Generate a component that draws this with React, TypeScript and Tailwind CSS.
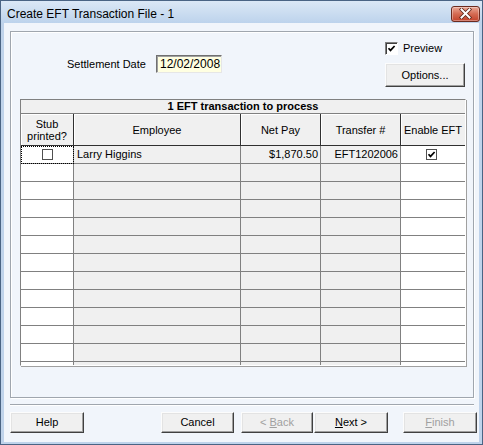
import React from "react";

const font = "font-['Liberation_Sans',Arial,sans-serif]";

function Check({ checked, size = 11 }: { checked?: boolean; size?: number }) {
  return (
    <div
      className={`flex items-center justify-center bg-white border border-[#505050] ${
        size === 11 ? "w-[11px] h-[11px]" : "w-[13px] h-[13px]"
      }`}
    >
      {checked && (
        <svg width="9" height="9" viewBox="0 0 9 9">
          <path d="M1.5 4.2 L3.5 6.4 L7.6 2" fill="none" stroke="#000" strokeWidth="1.7" />
        </svg>
      )}
    </div>
  );
}

function Btn({
  children,
  disabled,
  className = "",
}: {
  children: React.ReactNode;
  disabled?: boolean;
  className?: string;
}) {
  return (
    <div
      className={`h-[21px] flex items-center justify-center bg-[#f0f0f0] border border-t-[#fcfcfc] border-l-[#fcfcfc] border-r-[#404040] border-b-[#404040] shadow-[inset_-1px_-1px_0_#a0a0a0,inset_1px_1px_0_#e3e3e3] text-[11px] ${
        disabled ? "text-[#a0a0a0]" : "text-black"
      } ${className}`}
    >
      {children}
    </div>
  );
}

const cols = "grid grid-cols-[53px_167px_80px_80px_64px]";

const rows = Array.from({ length: 13 }, (_, i) => i);

export default function App() {
  return (
    <div className={`w-[483px] h-[445px] flex flex-col border border-[#4a6484] bg-[#bfd3eb] ${font} text-black select-none`}>
      {/* title bar */}
      <div className="h-[22px] flex items-center pl-[6px] pr-[2px] bg-gradient-to-b from-[#dbe8f6] to-[#bdd3ec]">
        <span className="text-[12px] leading-none pt-[3px]">Create EFT Transaction File - 1</span>
        <div className="ml-auto mt-[3px] w-[29px] h-[16px] rounded-[3px] border border-[#6b2b1f] bg-gradient-to-b from-[#e9a897] via-[#d46a52] to-[#c2412a] flex items-center justify-center shadow-[inset_0_0_0_1px_rgba(255,255,255,0.35)]">
          <svg width="13" height="11" viewBox="0 0 13 11">
            <path d="M2.5 1.5 L10.5 9.5 M10.5 1.5 L2.5 9.5" stroke="#5a2418" strokeWidth="3.6" strokeLinecap="square" />
            <path d="M2.5 1.5 L10.5 9.5 M10.5 1.5 L2.5 9.5" stroke="#fff" strokeWidth="2" strokeLinecap="square" />
          </svg>
        </div>
      </div>

      {/* client */}
      <div className="mx-[3px] h-[419px] bg-[#f1f5fb] pl-[6px] pt-[8px] flex flex-col text-[11px]">
        {/* group box */}
        <div className="w-[464px] h-[367px] border border-[#a0a6ae] shadow-[inset_1px_1px_0_#fff,1px_1px_0_#fff] flex flex-col">
          <div className="h-[67px] flex">
            <div className="pl-[56px] pt-[23px] flex items-start">
              <span className="leading-[18px] w-[89px]">Settlement Date</span>
              <div className="w-[66px] h-[18px] bg-[#ffffe1] border border-t-[#707070] border-l-[#707070] border-r-[#e6e6e6] border-b-[#e6e6e6] shadow-[inset_1px_1px_0_#a0a0a0] pl-[3px] leading-[16px] text-[12px]">
                12/02/2008
              </div>
            </div>
            <div className="ml-auto mr-[8px] w-[80px] pt-[10px] flex flex-col">
              <div className="h-[13px] flex items-center">
                <div className="w-[13px] h-[13px] bg-white border border-t-[#808080] border-l-[#808080] border-r-white border-b-white shadow-[inset_1px_1px_0_#404040] flex items-center justify-center">
                  <svg width="9" height="9" viewBox="0 0 9 9">
                    <path d="M1.5 4.2 L3.5 6.4 L7.6 2" fill="none" stroke="#000" strokeWidth="1.7" />
                  </svg>
                </div>
                <span className="ml-[5px] text-[11px]">Preview</span>
              </div>
              <Btn className="mt-[8px] !h-[24px] w-[80px]">Options...</Btn>
            </div>
          </div>

          {/* grid */}
          <div className="ml-[9px] w-[446px] h-[267px] border border-[#808080] border-r-white border-b-white shadow-[1px_1px_0_#a0a0a0] overflow-hidden bg-white">
            <div className="h-[14px] bg-[#f0f0f0] border-b border-[#808080] text-center font-bold leading-[13px] text-[11px]">
              1 EFT transaction to process
            </div>
            <div className={`${cols} h-[32px] bg-[#f0f0f0]`}>
              {[
                ["Stub", "printed?"],
                ["Employee"],
                ["Net Pay"],
                ["Transfer #"],
                ["Enable EFT"],
              ].map((lines, i) => (
                <div
                  key={i}
                  className={`flex flex-col items-center justify-center leading-[12px] border-b border-[#303030] ${
                    i < 4 ? "border-r" : ""
                  } shadow-[inset_1px_1px_0_#fff]`}
                >
                  {lines.map((l) => (
                    <span key={l}>{l}</span>
                  ))}
                </div>
              ))}
            </div>
            {rows.map((r) => (
              <div key={r} className={`${cols} h-[18px]`}>
                <div
                  className={`border-r border-b border-[#808080] bg-white flex items-center justify-center ${
                    r === 0 ? "outline outline-1 outline-dotted outline-black -outline-offset-1" : ""
                  }`}
                >
                  {r === 0 && <Check />}
                </div>
                <div className="border-r border-b border-[#808080] bg-[#f0f0f0] pl-[3px] leading-[17px]">
                  {r === 0 ? "Larry Higgins" : ""}
                </div>
                <div className="border-r border-b border-[#808080] bg-[#f0f0f0] pr-[2px] text-right leading-[17px]">
                  {r === 0 ? "$1,870.50" : ""}
                </div>
                <div className="border-r border-b border-[#808080] bg-[#f0f0f0] pr-[2px] text-right leading-[17px]">
                  {r === 0 ? "EFT1202006" : ""}
                </div>
                <div className="border-b border-[#808080] bg-white flex items-center justify-center pr-[3px]">
                  {r === 0 && <Check checked />}
                </div>
              </div>
            ))}
          </div>
        </div>

        {/* separator */}
        <div className="mt-[6px] w-[464px] h-[2px] border-t border-[#a0a6ae] border-b border-b-white" />

        {/* buttons */}
        <div className="mt-[6px] flex">
          <Btn className="w-[74px]">Help</Btn>
          <Btn className="w-[73px] ml-[77px]">Cancel</Btn>
          <Btn disabled className="w-[72px] ml-[7px]">
            &lt; <span className="underline ml-[3px]">B</span>ack
          </Btn>
          <Btn className="w-[74px] ml-[1px]">
            <span className="underline">N</span>ext &gt;
          </Btn>
          <Btn disabled className="w-[74px] ml-[15px]">
            <span className="underline">F</span>inish
          </Btn>
        </div>
      </div>
    </div>
  );
}
